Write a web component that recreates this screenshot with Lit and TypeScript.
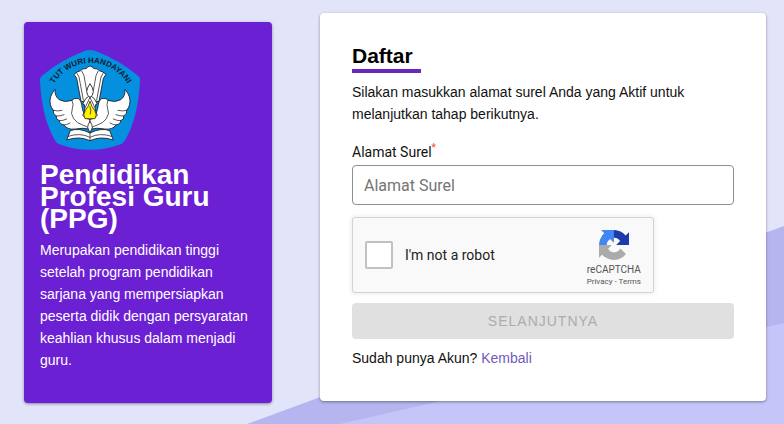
import { LitElement, html, css, svg } from "lit";
import { customElement, state } from "lit/decorators.js";

@customElement("ppg-emblem")
export class PpgEmblem extends LitElement {
  static styles = css`
    :host {
      display: block;
      width: 100px;
      height: 100px;
    }
    svg {
      display: block;
      width: 100%;
      height: 100%;
    }
    .shield {
      fill: #0490df;
    }
    .motto {
      font: bold 24px "Liberation Sans", Arial, sans-serif;
      fill: #10202c;
    }
    .white {
      fill: #fff;
      stroke: #1d1d22;
      stroke-width: 2.6;
      stroke-linejoin: round;
    }
    .line {
      fill: none;
      stroke: #1d1d22;
      stroke-width: 2.2;
      stroke-linecap: round;
    }
    .oil {
      fill: #fff100;
      stroke: #1d1d22;
      stroke-width: 2.2;
    }
  `;

  private wing() {
    return svg`
      <path class="white" d="M75 136 Q56 158 61 181 Q63 191 70 199 Q67 209 79 216 Q76 226 88 230
        Q88 240 102 243 Q112 258 136 255 Q160 250 180 256 L180 226 L164 214 Q156 196 155 182
        Q152 164 141 163 Q131 162 126 169 Q105 177 88 167 Q74 158 75 136Z"/>
      <path class="line" d="M126 169 Q132 181 127 194 Q120 208 131 224 Q140 238 158 243 Q172 246 178 256"/>
      <path class="line" d="M70 199 Q82 203 96 199 M79 216 Q90 217 102 212 M88 230 Q98 231 110 225 M102 243 Q110 243 120 237"/>
    `;
  }

  render() {
    return html`
      <svg viewBox="30 18 300 300" role="img" aria-label="Tut Wuri Handayani">
        <defs>
          <path id="arc" d="M64 134 A129 129 0 0 1 300 134" />
        </defs>
        <path
          class="shield"
          d="M163 21 Q180 15 197 21 Q270 50 324 95 Q331 101 330 110 Q325 220 285 289 Q281 297 272 301 Q180 334 88 301 Q79 297 75 289 Q35 220 30 110 Q29 101 36 95 Q90 50 163 21Z"
        />
        <text class="motto" text-anchor="middle">
          <textPath href="#arc" startOffset="50%">TUT WURI HANDAYANI</textPath>
        </text>
        <path
          class="white"
          d="M132 91 Q142 82 152 80 Q158 72 168 74 Q174 67 180 66 Q186 67 192 74 Q202 72 208 80 Q218 82 228 91 L220 103 L207 172 L153 172 L140 103Z"
        />
        <path
          class="line"
          d="M141 88 Q149 97 150 115 L160 168 M156 82 Q164 94 165 112 L170 140 M204 82 Q196 94 195 112 L190 140 M219 88 Q211 97 210 115 L200 168"
        />
        ${this.wing()}
        <g transform="matrix(-1 0 0 1 360 0)">${this.wing()}</g>
        <path
          class="white"
          d="M180 154 Q166 160 158 180 Q164 178 165 190 Q164 206 158 214 Q168 226 180 226 Q192 226 202 214 Q196 206 195 190 Q196 178 202 180 Q194 160 180 154Z"
        />
        <path class="white" d="M180 119 Q170 133 170 143 Q171 156 180 160 Q189 156 190 143 Q190 133 180 119Z" />
        <path class="line" d="M180 160 L166 190 M180 160 L194 190" />
        <path
          class="oil"
          d="M180 171 Q176 188 166 199 Q157 213 165 224 L195 224 Q203 213 194 199 Q184 188 180 171Z"
        />
        <path class="line" d="M180 188 Q185 198 181 210" />
        <path
          class="white"
          d="M180 267 Q146 250 121 260 L110 288 Q148 275 180 290 Q212 275 250 288 L239 260 Q214 250 180 267Z"
        />
        <path class="line" d="M180 267 V290 M115 277 Q150 265 180 280 Q210 265 245 277" />
        <path class="white" d="M180 232 Q173 242 173 250 L177 262 H183 L187 250 Q187 242 180 232Z" />
      </svg>
    `;
  }
}

@customElement("captcha-box")
export class CaptchaBox extends LitElement {
  static styles = css`
    :host {
      display: flex;
      box-sizing: border-box;
      width: 302px;
      max-width: 100%;
      height: 76px;
      padding: 0 12px;
      align-items: center;
      justify-content: space-between;
      border: 1px solid #d3d3d3;
      border-radius: 3px;
      background: #f9f9f9;
      box-shadow: 0 0 4px 1px rgba(0, 0, 0, 0.08);
      font-family: Roboto, "Liberation Sans", sans-serif;
      color: #222;
    }
    .check {
      display: flex;
      align-items: center;
      gap: 12px;
      font-size: 14px;
      line-height: 18px;
    }
    .tick {
      appearance: none;
      box-sizing: border-box;
      width: 28px;
      height: 28px;
      margin: 0;
      border: 2px solid #c1c1c1;
      border-radius: 2px;
      background: #fff;
    }
    .tick:checked {
      background: #4285f4;
    }
    .brand {
      display: flex;
      flex-direction: column;
      align-items: center;
      padding-top: 8px;
      color: #555;
      font-size: 10px;
      line-height: 12px;
    }
    .mark {
      display: block;
      width: 30px;
      height: 30px;
      margin-bottom: 4px;
    }
    .terms {
      font-size: 8px;
    }
    .terms a {
      color: inherit;
      text-decoration: none;
    }
    .dark {
      fill: #1c3aa9;
    }
    .light {
      fill: #4285f4;
    }
    .grey {
      fill: #ababab;
    }
  `;

  render() {
    return html`
      <label class="check"><input class="tick" type="checkbox" />I'm not a robot</label>
      <div class="brand">
        <svg class="mark" viewBox="0 0 64 64" aria-hidden="true">
          <path
            class="dark"
            d="M64 31.955l-.033-1.37V4.687l-7.16 7.16C50.948 4.674 42.033.093 32.05.093c-10.4 0-19.622 4.96-25.458 12.64l11.736 11.86a15.55 15.55 0 0 1 4.754-5.334c2.05-1.6 4.952-2.906 8.968-2.906.485 0 .86.057 1.135.163 4.976.393 9.288 3.14 11.828 7.124l-8.307 8.307L64 31.953"
          />
          <path
            class="light"
            d="M31.862.094l-1.37.033H4.594l7.16 7.16C4.58 13.147 0 22.06 0 32.046c0 10.4 4.96 19.622 12.64 25.458L24.5 45.768a15.55 15.55 0 0 1-5.334-4.754c-1.6-2.05-2.906-4.952-2.906-8.968 0-.485.057-.86.163-1.135.393-4.976 3.14-9.288 7.124-11.828l8.307 8.307L31.86.095"
          />
          <path
            class="grey"
            d="M.001 32.045l.033 1.37v25.898l7.16-7.16c5.86 7.173 14.774 11.754 24.76 11.754 10.4 0 19.622-4.96 25.458-12.64l-11.736-11.86a15.55 15.55 0 0 1-4.754 5.334c-2.05 1.6-4.952 2.906-8.968 2.906-.485 0-.86-.057-1.135-.163-4.976-.393-9.288-3.14-11.828-7.124l8.307-8.307c-10.522.04-22.4.066-27.295-.005"
          />
        </svg>
        <span>reCAPTCHA</span>
        <span class="terms"><a href="#privacy">Privacy</a> - <a href="#terms">Terms</a></span>
      </div>
    `;
  }
}

@customElement("app-root")
export class AppRoot extends LitElement {
  static styles = css`
    :host {
      display: block;
      position: relative;
      box-sizing: border-box;
      min-height: 100vh;
      background: #e2e4fa;
      font-family: "Liberation Sans", Arial, sans-serif;
      font-size: 14px;
      line-height: 22px;
      color: #111;
    }
    .backdrop {
      position: absolute;
      inset: 0;
      width: 100%;
      height: 100%;
    }
    .band {
      fill: #b6b5ef;
    }
    .floor {
      fill: #c6c5f9;
    }
    .page {
      position: relative;
      display: grid;
      grid-template-columns: minmax(0, 124fr) minmax(0, 223fr);
      align-items: start;
      column-gap: 48px;
      padding: 13px 18px 20px 24px;
    }
    .card {
      border-radius: 4px;
      box-shadow: 0 1px 3px rgba(0, 0, 0, 0.4);
    }
    .about {
      margin-top: 9px;
      padding: 28px 16px 32px;
      background: #6c20d4;
      color: #fff;
    }
    .title {
      margin: 14px 0 9px;
      font-size: 28px;
      line-height: 22px;
    }
    .text {
      margin: 0;
    }
    .signup {
      padding: 32px;
      background: #fff;
    }
    .heading {
      width: fit-content;
      margin: 0 0 8px;
      padding: 0 8px 2px 0;
      border-bottom: 4px solid #6a27be;
      font-size: 21px;
      line-height: 22px;
      color: #000;
    }
    .label {
      display: block;
      margin: 16px 0 2px;
      font-family: Roboto, "Liberation Sans", sans-serif;
    }
    .required {
      color: #f44336;
      font-size: 10px;
      line-height: 0;
      vertical-align: super;
    }
    .field {
      display: block;
      box-sizing: border-box;
      width: 100%;
      height: 40px;
      padding: 0 11px;
      border: 1px solid #8f8f8f;
      border-radius: 4px;
      background: #fff;
      font: 16px Roboto, "Liberation Sans", sans-serif;
      color: #222;
    }
    .field::placeholder {
      color: #757575;
    }
    .captcha {
      margin: 12px 0 10px;
    }
    .next {
      display: block;
      width: 100%;
      height: 36px;
      padding: 0;
      border: 0;
      border-radius: 4px;
      background: #e0e0e0;
      font: 14px "Liberation Sans", Arial, sans-serif;
      letter-spacing: 1px;
      text-transform: uppercase;
      color: #acacac;
    }
    .foot {
      margin: 8px 0 0;
    }
    .link {
      color: #7459bd;
      text-decoration: none;
    }
  `;

  @state() private email = "";

  private onInput(e: Event) {
    this.email = (e.target as HTMLInputElement).value;
  }

  render() {
    return html`
      <svg class="backdrop" viewBox="0 0 784 424" preserveAspectRatio="none" aria-hidden="true">
        <path class="band" d="M247 424 L784 226 V424Z" />
        <path class="floor" d="M340 424 L784 323 V424Z" />
      </svg>
      <main class="page">
        <section class="card about">
          <ppg-emblem></ppg-emblem>
          <h1 class="title">Pendidikan Profesi Guru (PPG)</h1>
          <p class="text">
            Merupakan pendidikan tinggi setelah program pendidikan sarjana yang mempersiapkan peserta didik dengan
            persyaratan keahlian khusus dalam menjadi guru.
          </p>
        </section>
        <form class="card signup" @submit=${(e: Event) => e.preventDefault()}>
          <h2 class="heading">Daftar</h2>
          <p class="text">Silakan masukkan alamat surel Anda yang Aktif untuk melanjutkan tahap berikutnya.</p>
          <label class="label" for="email">Alamat Surel<span class="required">*</span></label>
          <input
            class="field"
            id="email"
            type="email"
            placeholder="Alamat Surel"
            .value=${this.email}
            @input=${this.onInput}
          />
          <captcha-box class="captcha"></captcha-box>
          <button class="next" type="submit" disabled>Selanjutnya</button>
          <p class="foot">Sudah punya Akun? <a class="link" href="#kembali">Kembali</a></p>
        </form>
      </main>
    `;
  }
}
